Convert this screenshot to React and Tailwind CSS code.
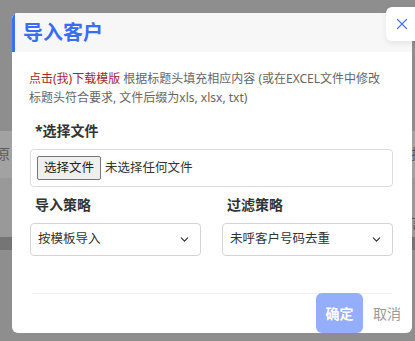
import React from 'react';
import { ChevronDown, X } from 'lucide-react';

const FONT = "font-['Noto_Sans','Noto_Sans_CJK_SC',sans-serif]";

function SelectBox({ value }) {
  return (
    <div className="flex h-[33px] w-[171px] items-center justify-between rounded-[4px] border border-[#d4d4d4] bg-white pl-[7px] pr-[9px]">
      <span className="text-[12.5px] text-[#333]">{value}</span>
      <ChevronDown size={13} strokeWidth={2.2} className="text-[#333]" />
    </div>
  );
}

export default function App() {
  return (
    <div className={`relative h-[341px] w-[415px] overflow-hidden bg-[#8e8e8e] ${FONT}`}>
      {/* page behind the overlay */}
      <div className="flex h-full flex-col">
        <div className="h-[131px]" />
        <div className="flex h-[47px] items-start justify-between bg-[#a2a2a2] pt-[12px] text-[14px] text-[#5c5c5c]">
          <span className="-ml-[4px]">原</span>
          <span className="-mr-[10px]">拉</span>
        </div>
        <div className="flex h-[59px] items-end justify-end bg-[#999] pb-[4px] text-[14px] text-[#5c5c5c]">
          <span className="-mr-[10px]">言</span>
        </div>
        <div className="h-[13px] bg-[#757575]" />
        <div className="flex-1 bg-[#8e8e8e]" />
      </div>

      {/* dialog */}
      <div className="absolute left-[12px] top-[13px] flex h-[320px] w-[400px] flex-col overflow-hidden rounded-[6px] bg-white">
        <div className="flex h-[39px] shrink-0 items-center border-l-[3px] border-[#3d6cf6] bg-[#f7f7f8] pl-[8px]">
          <span className="text-[20px] font-bold leading-none text-[#3a6cf4]">导入客户</span>
        </div>

        <div className="pl-[17px] pr-[22px] pt-[17px] text-[12px] leading-[19px] text-[#666]">
          <span className="text-[#9d2b2b]">点击(我)下载模版</span> 根据标题头填充相应内容 (或在EXCEL文件中修改标题头符合要求, 文件后缀为xls, xlsx, txt)
        </div>

        <div className="mt-[14px] pl-[23px] text-[14px] font-bold leading-[20px] text-[#333]">*选择文件</div>

        <div className="ml-[18px] mt-[8px] flex h-[38px] w-[363px] items-center rounded-[4px] border border-[#dcdcdc] pl-[6px]">
          <div className="flex h-[24px] w-[64px] items-center justify-center rounded-[2px] border border-[#767676] bg-[#efefef] text-[12.5px] text-[#222]">
            选择文件
          </div>
          <span className="ml-[4px] text-[12.5px] text-[#333]">未选择任何文件</span>
        </div>

        <div className="ml-[18px] mt-[8px] flex w-[363px] gap-[21px]">
          <div className="flex flex-col">
            <span className="pl-[5px] text-[14px] font-semibold leading-[20px] text-[#333]">导入策略</span>
            <div className="mt-[8px]">
              <SelectBox value="按模板导入" />
            </div>
          </div>
          <div className="flex flex-col">
            <span className="pl-[5px] text-[14px] font-semibold leading-[20px] text-[#333]">过滤策略</span>
            <div className="mt-[8px]">
              <SelectBox value="未呼客户号码去重" />
            </div>
          </div>
        </div>

        <div className="mx-[20px] mt-[37px] h-px bg-[#efefef]" />
        <div className="-mt-px flex items-center justify-end gap-[10px] pr-[11px]">
          <div className="flex h-[40px] w-[47px] items-center justify-center rounded-[6px] bg-[#95aefb] text-[14px] font-bold text-white">
            确定
          </div>
          <span className="text-[14px] text-[#999]">取消</span>
        </div>
      </div>

      {/* close button */}
      <div className="absolute left-[386px] top-[7px] flex h-[34px] w-[34px] items-center rounded-[6px] bg-white pl-[7px] shadow-[0_2px_6px_rgba(0,0,0,0.08)]">
        <X size={18} strokeWidth={1.6} className="text-[#4a72f5]" />
      </div>
    </div>
  );
}
